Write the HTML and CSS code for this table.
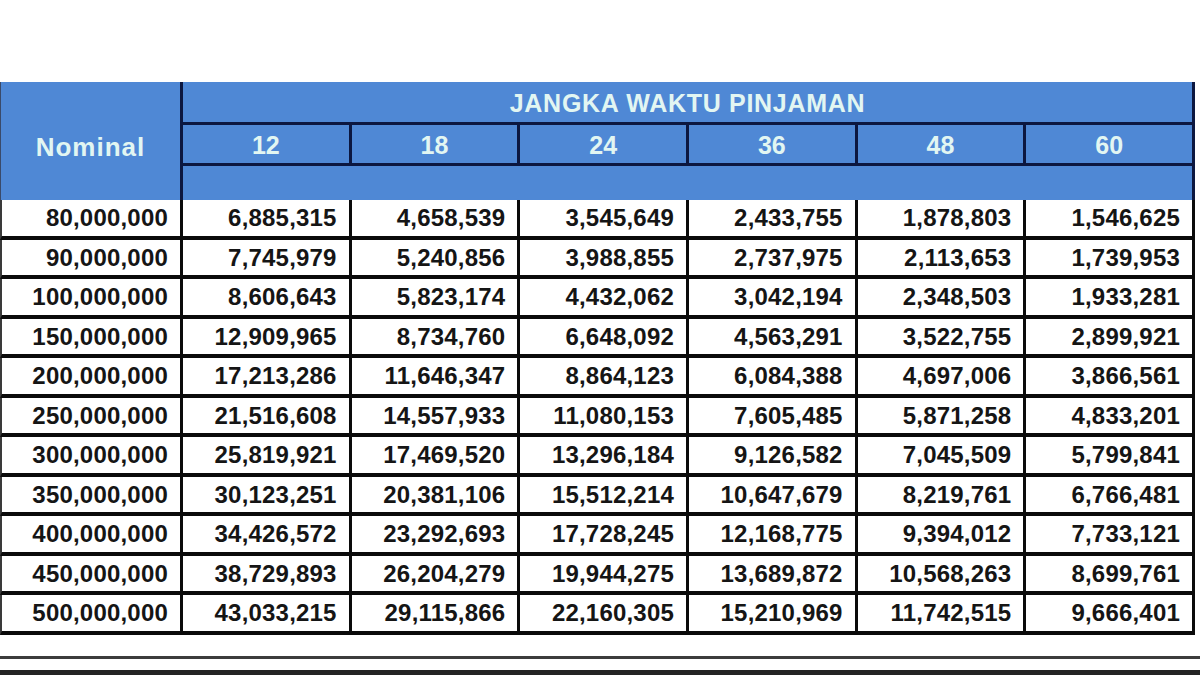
FILE: index.html
```html
<!DOCTYPE html>
<html lang="id">
<head>
<meta charset="utf-8">
<title>Tabel Angsuran</title>
<link rel="stylesheet" href="styles.css">
</head>
<body>
<div class="sheet">
  <div class="h nominal">Nominal</div>
  <div class="h title">JANGKA WAKTU PINJAMAN</div>
  <div class="h term">12</div>
  <div class="h term">18</div>
  <div class="h term">24</div>
  <div class="h term">36</div>
  <div class="h term">48</div>
  <div class="h term last">60</div>
  <div class="h blank"></div>

  <div class="d first">80,000,000</div><div class="d">6,885,315</div><div class="d">4,658,539</div><div class="d">3,545,649</div><div class="d">2,433,755</div><div class="d">1,878,803</div><div class="d">1,546,625</div>
  <div class="d first">90,000,000</div><div class="d">7,745,979</div><div class="d">5,240,856</div><div class="d">3,988,855</div><div class="d">2,737,975</div><div class="d">2,113,653</div><div class="d">1,739,953</div>
  <div class="d first">100,000,000</div><div class="d">8,606,643</div><div class="d">5,823,174</div><div class="d">4,432,062</div><div class="d">3,042,194</div><div class="d">2,348,503</div><div class="d">1,933,281</div>
  <div class="d first">150,000,000</div><div class="d">12,909,965</div><div class="d">8,734,760</div><div class="d">6,648,092</div><div class="d">4,563,291</div><div class="d">3,522,755</div><div class="d">2,899,921</div>
  <div class="d first">200,000,000</div><div class="d">17,213,286</div><div class="d">11,646,347</div><div class="d">8,864,123</div><div class="d">6,084,388</div><div class="d">4,697,006</div><div class="d">3,866,561</div>
  <div class="d first">250,000,000</div><div class="d">21,516,608</div><div class="d">14,557,933</div><div class="d">11,080,153</div><div class="d">7,605,485</div><div class="d">5,871,258</div><div class="d">4,833,201</div>
  <div class="d first">300,000,000</div><div class="d">25,819,921</div><div class="d">17,469,520</div><div class="d">13,296,184</div><div class="d">9,126,582</div><div class="d">7,045,509</div><div class="d">5,799,841</div>
  <div class="d first">350,000,000</div><div class="d">30,123,251</div><div class="d">20,381,106</div><div class="d">15,512,214</div><div class="d">10,647,679</div><div class="d">8,219,761</div><div class="d">6,766,481</div>
  <div class="d first">400,000,000</div><div class="d">34,426,572</div><div class="d">23,292,693</div><div class="d">17,728,245</div><div class="d">12,168,775</div><div class="d">9,394,012</div><div class="d">7,733,121</div>
  <div class="d first">450,000,000</div><div class="d">38,729,893</div><div class="d">26,204,279</div><div class="d">19,944,275</div><div class="d">13,689,872</div><div class="d">10,568,263</div><div class="d">8,699,761</div>
  <div class="d first">500,000,000</div><div class="d">43,033,215</div><div class="d">29,115,866</div><div class="d">22,160,305</div><div class="d">15,210,969</div><div class="d">11,742,515</div><div class="d">9,666,401</div>
</div>
<div class="rule rule-a"></div>
<div class="rule rule-b"></div>
</body>
</html>
```

FILE: styles.css
```css
html, body {
  margin: 0;
  padding: 0;
  background: #ffffff;
}
body {
  width: 1200px;
  height: 675px;
  overflow: hidden;
  font-family: "Liberation Sans", Arial, sans-serif;
  font-weight: bold;
}
.sheet {
  margin-top: 82px;
  width: 1195px;
  display: grid;
  grid-template-columns: 183px repeat(6, 1fr);
}
.h {
  background: #4f88d5;
  color: #e2f6f2;
  font-size: 25px;
  display: flex;
  align-items: center;
  justify-content: center;
  box-sizing: border-box;
}
.nominal {
  grid-row: 1 / span 3;
  grid-column: 1;
  border-right: 3px solid #0c1740;
  border-left: 1px solid #3a4a6a;
  padding-top: 12px;
  font-size: 26px;
  letter-spacing: 1px;
}
.title {
  grid-column: 2 / span 6;
  height: 43px;
  border-bottom: 3px solid #0c1740;
  border-right: 3px solid #0c1740;
  letter-spacing: 0.7px;
  padding-top: 3px;
}
.term {
  height: 41px;
  border-bottom: 3px solid #0c1740;
  border-right: 3px solid #0c1740;
  padding-top: 3px;
}
.blank {
  grid-column: 2 / span 6;
  height: 34px;
  border-right: 3px solid #0c1740;
}
.d {
  height: 39.5px;
  box-sizing: border-box;
  border-bottom: 4px solid #0a0a0a;
  border-right: 3px solid #0a0a0a;
  display: flex;
  align-items: center;
  justify-content: flex-end;
  padding: 1px 12px 0 0;
  font-size: 24px;
  letter-spacing: 0.2px;
  color: #151515;
}
.d.first {
  border-left: 2px solid #3a3a3a;
}
.rule {
  width: 1200px;
}
.rule-a {
  margin-top: 21px;
  height: 3px;
  background: #3c3c3c;
}
.rule-b {
  margin-top: 11px;
  height: 5px;
  background: #232323;
}
```
